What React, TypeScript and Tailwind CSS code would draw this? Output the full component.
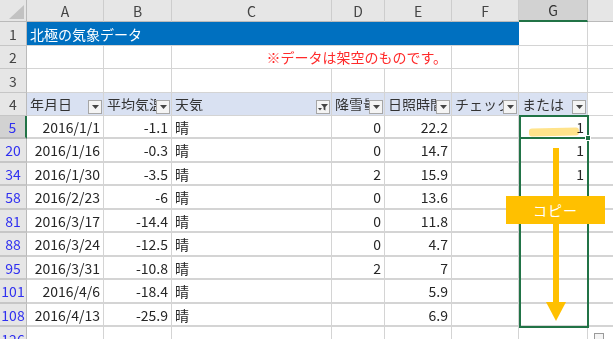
const COLS = "grid grid-cols-[27px_77px_68px_160px_53px_67px_67px_69px_25px]";
const GRID = "border-r border-b border-[#d4d4d4]";

type DataRow = { n: string; a: string; b: string; d: string; e: string; g: string; h: string };

const dataRows: DataRow[] = [
  { n: "5", a: "2016/1/1", b: "-1.1", d: "0", e: "22.2", g: "1", h: "h-[23px]" },
  { n: "20", a: "2016/1/16", b: "-0.3", d: "0", e: "14.7", g: "1", h: "h-[24px]" },
  { n: "34", a: "2016/1/30", b: "-3.5", d: "2", e: "15.9", g: "1", h: "h-[23px]" },
  { n: "58", a: "2016/2/23", b: "-6", d: "0", e: "13.6", g: "", h: "h-[24px]" },
  { n: "81", a: "2016/3/17", b: "-14.4", d: "0", e: "11.8", g: "", h: "h-[23px]" },
  { n: "88", a: "2016/3/24", b: "-12.5", d: "0", e: "4.7", g: "", h: "h-[24px]" },
  { n: "95", a: "2016/3/31", b: "-10.8", d: "2", e: "7", g: "", h: "h-[23px]" },
  { n: "101", a: "2016/4/6", b: "-18.4", d: "", e: "5.9", g: "", h: "h-[24px]" },
  { n: "108", a: "2016/4/13", b: "-25.9", d: "", e: "6.9", g: "", h: "h-[23px]" },
];

const RowHead = ({ n, blue, active, thick }: { n: string; blue?: boolean; active?: boolean; thick?: boolean }) => (
  <div
    className={`flex items-center justify-center border-b text-[14px] ${thick ? "border-b-2" : ""} ${
      active ? "bg-[#d2d2d2] border-r-2 border-r-[#217346] border-b-[#bdbdbd]" : "bg-[#e6e6e6] border-r border-r-[#bababa] border-b-[#c6c6c6]"
    } ${blue ? "text-[#3030f0]" : "text-[#444]"}`}
  >
    {n}
  </div>
);

const FilterBtn = ({ active }: { active?: boolean }) => (
  <span className="mb-[1px] mr-[1px] flex h-[14px] w-[14px] shrink-0 items-center justify-center self-end border border-[#a6a6a6] bg-[#f4f4f4]">
    {active ? (
      <svg width="10" height="8" viewBox="0 0 10 8">
        <polygon points="0,5 4,5 2,7.5" fill="#444" />
        <polygon points="3,1 10,1 7.4,4 7.4,7.5 5.6,6.5 5.6,4" fill="#444" />
      </svg>
    ) : (
      <svg width="7" height="4" viewBox="0 0 7 4">
        <polygon points="0,0 7,0 3.5,4" fill="#444" />
      </svg>
    )}
  </span>
);

const HeadCell = ({ label, active }: { label: string; active?: boolean }) => (
  <div className={`flex items-center bg-[#d9e1f2] pl-[3px] ${GRID}`}>
    <span className="min-w-0 flex-1 overflow-hidden whitespace-nowrap text-[#333]">{label}</span>
    <FilterBtn active={active} />
  </div>
);

const Num = ({ v, thick }: { v: string; thick?: boolean }) => (
  <div className={`flex items-center justify-end pr-[3px] text-[#262626] ${GRID} ${thick ? "border-b-2" : ""}`}>{v}</div>
);

export default function App() {
  return (
    <div className="relative h-[339px] w-[613px] overflow-hidden bg-white font-['Noto_Sans_CJK_JP',sans-serif] text-[14px] leading-none">
      {/* column headers */}
      <div className={`${COLS} h-[22px]`}>
        <div className="relative border-r border-b border-r-[#bababa] border-b-[#bababa] bg-[#e6e6e6]">
          <svg className="absolute left-0 top-0" width="27" height="22" viewBox="0 0 27 22">
            <polygon points="24,5 24,19 9,19" fill="#c2c2c2" />
          </svg>
        </div>
        {["A", "B", "C", "D", "E", "F"].map((c) => (
          <div key={c} className="flex items-center justify-center border-r border-b border-r-[#cdcdcd] border-b-[#bababa] bg-[#e6e6e6] text-[14px] text-[#444]">
            {c}
          </div>
        ))}
        <div className="flex items-center justify-center border-r border-b-2 border-r-[#bababa] border-b-[#217346] bg-[#d2d2d2] text-[14px] text-[#333]">
          G
        </div>
        <div className="border-b border-b-[#bababa] bg-[#e6e6e6]" />
      </div>

      {/* row 1 */}
      <div className={`${COLS} h-[24px]`}>
        <RowHead n="1" />
        <div className="col-span-6 flex items-center border-b border-[#d4d4d4] bg-[#0070c0] pl-[3px] text-white">北極の気象データ</div>
        <div className={GRID} />
        <div className="border-b border-[#d4d4d4]" />
      </div>

      {/* row 2 */}
      <div className={`${COLS} h-[23px]`}>
        <RowHead n="2" />
        <div className={GRID} />
        <div className={GRID} />
        <div className={`col-span-3 flex items-center justify-end pr-[4px] text-[#ff2b2b] ${GRID}`}>※データは架空のものです。</div>
        <div className={GRID} />
        <div className={GRID} />
        <div className="border-b border-[#d4d4d4]" />
      </div>

      {/* row 3 */}
      <div className={`${COLS} h-[24px]`}>
        <RowHead n="3" />
        {[0, 1, 2, 3, 4, 5, 6].map((i) => (
          <div key={i} className={GRID} />
        ))}
        <div className="border-b border-[#d4d4d4]" />
      </div>

      {/* row 4: table header */}
      <div className={`${COLS} h-[23px]`}>
        <RowHead n="4" />
        <HeadCell label="年月日" />
        <HeadCell label="平均気温" />
        <HeadCell label="天気" active />
        <HeadCell label="降雪量" />
        <HeadCell label="日照時間" />
        <HeadCell label="チェック" />
        <HeadCell label="または" />
        <div className="border-b border-[#d4d4d4]" />
      </div>

      {/* data rows */}
      {dataRows.map((r, i) => (
        <div key={r.n} className={`${COLS} ${r.h}`}>
          <RowHead n={r.n} blue active={i === 0} thick />
          <Num v={r.a} thick />
          <Num v={r.b} thick />
          <div className={`flex items-center pl-[3px] text-[#262626] ${GRID} border-b-2`}>晴</div>
          <Num v={r.d} thick />
          <Num v={r.e} thick />
          <div className={`${GRID} border-b-2`} />
          <Num v={r.g} thick />
          <div className="border-b-2 border-[#d4d4d4]" />
        </div>
      ))}

      {/* row 126 */}
      <div className={`${COLS} h-[24px]`}>
        <RowHead n="126" blue />
        {[0, 1, 2, 3, 4, 5, 6].map((i) => (
          <div key={i} className={GRID} />
        ))}
        <div className="border-b border-[#d4d4d4]" />
      </div>

      {/* annotations drawn over the sheet */}
      <div className="absolute left-[529px] top-[128px] h-[8px] w-[50px] -rotate-1 rounded-[3px] bg-[#ffe07e] opacity-90 mix-blend-multiply" />
      <div className="absolute left-[519px] top-[115px] h-[213px] w-[70px] border-2 border-[#217346]" />
      <div className="absolute left-[519px] top-[137px] h-[2px] w-[70px] bg-[#217346]" />
      <div className="absolute left-[585px] top-[135px] h-[6px] w-[6px] border border-white bg-[#217346]" />
      <div className="absolute left-[553px] top-[148px] h-[157px] w-[6px] bg-[#ffc000]" />
      <svg className="absolute left-[546px] top-[302px]" width="20" height="19" viewBox="0 0 20 19">
        <polygon points="0,0 20,0 10,19" fill="#ffc000" />
      </svg>
      <div className="absolute left-[506px] top-[196px] flex h-[28px] w-[99px] items-center justify-center bg-[#ffc000] text-[14px] tracking-[1px] text-white">
        コピー
      </div>
      <div className="absolute left-[594px] top-[333px] h-[10px] w-[10px] border border-[#9a9a9a] bg-[#f4f4f4]" />
    </div>
  );
}
